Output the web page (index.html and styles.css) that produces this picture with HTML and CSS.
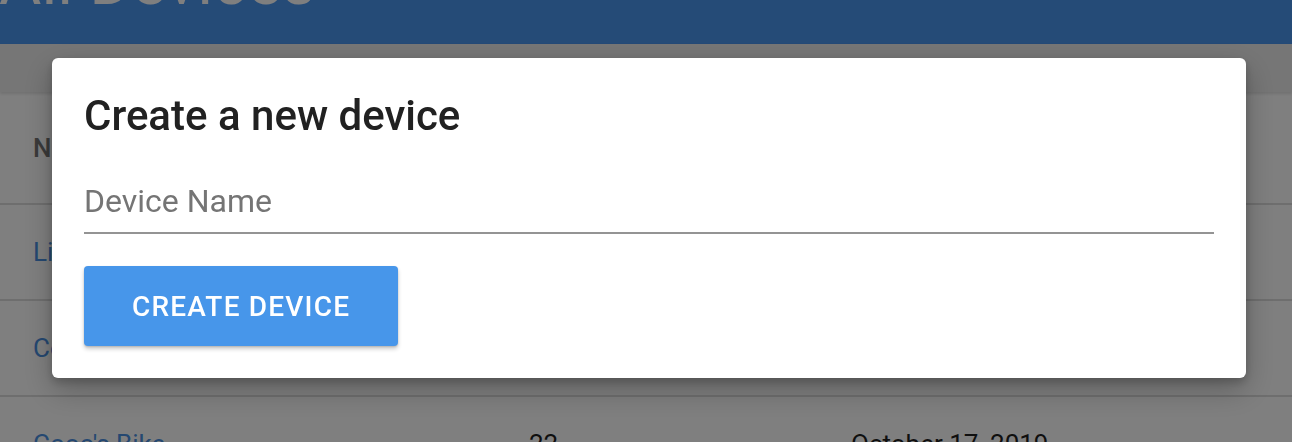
FILE: index.html
```html
<!DOCTYPE html>
<html lang="en">
<head>
<meta charset="utf-8">
<title>All Devices</title>
<link rel="stylesheet" href="styles.css">
</head>
<body>
<div class="page">
  <header class="appbar">
    <h1 class="appbar-title">All Devices</h1>
  </header>
  <div class="toolbar"></div>
  <table class="devices">
    <colgroup>
      <col class="col-name">
      <col class="col-count">
      <col class="col-date">
    </colgroup>
    <thead>
      <tr><th>Name</th><th>Readings</th><th>Created</th></tr>
    </thead>
    <tbody>
      <tr><td><a href="#">Living Room Sensor</a></td><td>14</td><td>October 12, 2019</td></tr>
      <tr><td><a href="#">Coffee Machine</a></td><td>8</td><td>October 15, 2019</td></tr>
      <tr><td><a href="#">Cooo's Bike</a></td><td>22</td><td>October 17, 2019</td></tr>
    </tbody>
  </table>
</div>

<div class="backdrop">
  <div class="dialog" role="dialog">
    <h2 class="dialog-title">Create a new device</h2>
    <div class="field">
      <input class="field-input" type="text" placeholder="Device Name">
    </div>
    <button class="btn-primary" type="button">Create Device</button>
  </div>
</div>
</body>
</html>
```

FILE: styles.css
```css
html, body {
  margin: 0;
  padding: 0;
}

body {
  width: 1292px;
  height: 442px;
  overflow: hidden;
  background: #ffffff;
  font-family: Roboto, "Noto Sans", "Liberation Sans", sans-serif;
  color: #212121;
}

.page {
  display: flex;
  flex-direction: column;
}

.appbar {
  height: 44px;
  background: #4a96ef;
  display: flex;
  align-items: flex-start;
  overflow: hidden;
}

.appbar-title {
  margin: -50px 0 0 -1px;
  font-size: 65px;
  line-height: 64px;
  font-weight: 400;
  color: #ffffff;
  white-space: nowrap;
}

.toolbar {
  height: 48px;
  background: #ececec;
  box-shadow: 0 2px 3px rgba(0, 0, 0, 0.12);
  position: relative;
  z-index: 1;
}

.devices {
  width: 100%;
  border-collapse: collapse;
  table-layout: fixed;
  font-size: 26px;
}

.col-name { width: 496px; }
.col-count { width: 322px; }

.devices th,
.devices td {
  text-align: left;
  padding: 0 0 0 33px;
  border-bottom: 2px solid #dddddd;
  white-space: nowrap;
  overflow: hidden;
}

.devices th {
  height: 111px;
  font-weight: 500;
  color: #747474;
}

.devices td {
  height: 94px;
  color: #1f1f1f;
}

.devices a {
  color: #4a90e2;
  text-decoration: none;
}

.backdrop {
  position: fixed;
  inset: 0;
  background: rgba(0, 0, 0, 0.5);
  z-index: 10;
  display: flex;
  align-items: flex-start;
  padding: 58px 46px 0 52px;
}

.dialog {
  flex: 1;
  background: #ffffff;
  border-radius: 6px;
  padding: 26px 32px 32px 32px;
  box-shadow: 0 12px 30px rgba(0, 0, 0, 0.25), 0 4px 10px rgba(0, 0, 0, 0.2);
  display: flex;
  flex-direction: column;
  align-items: flex-start;
}

.dialog-title {
  margin: 0;
  font-size: 42px;
  line-height: 64px;
  font-weight: 500;
  color: #212121;
}

.field {
  align-self: stretch;
  margin-top: 18px;
}

.field-input {
  display: block;
  width: 100%;
  box-sizing: border-box;
  border: 0;
  border-bottom: 2px solid #949494;
  outline: none;
  background: transparent;
  padding: 16px 0 12px 0;
  margin: 0;
  font-family: Roboto, "Noto Sans", "Liberation Sans", sans-serif;
  font-size: 32px;
  line-height: 38px;
  height: 68px;
  color: #212121;
}

.field-input::placeholder {
  color: #757575;
  opacity: 1;
}

.btn-primary {
  margin-top: 32px;
  height: 80px;
  padding: 0 48px;
  border: 0;
  border-radius: 4px;
  background: #4796ea;
  color: #ffffff;
  font-family: Roboto, "Noto Sans", "Liberation Sans", sans-serif;
  font-size: 28px;
  font-weight: 500;
  letter-spacing: 1.2px;
  text-transform: uppercase;
  box-shadow: 0 3px 4px rgba(0, 0, 0, 0.2), 0 1px 2px rgba(0, 0, 0, 0.14);
  cursor: pointer;
}
```
